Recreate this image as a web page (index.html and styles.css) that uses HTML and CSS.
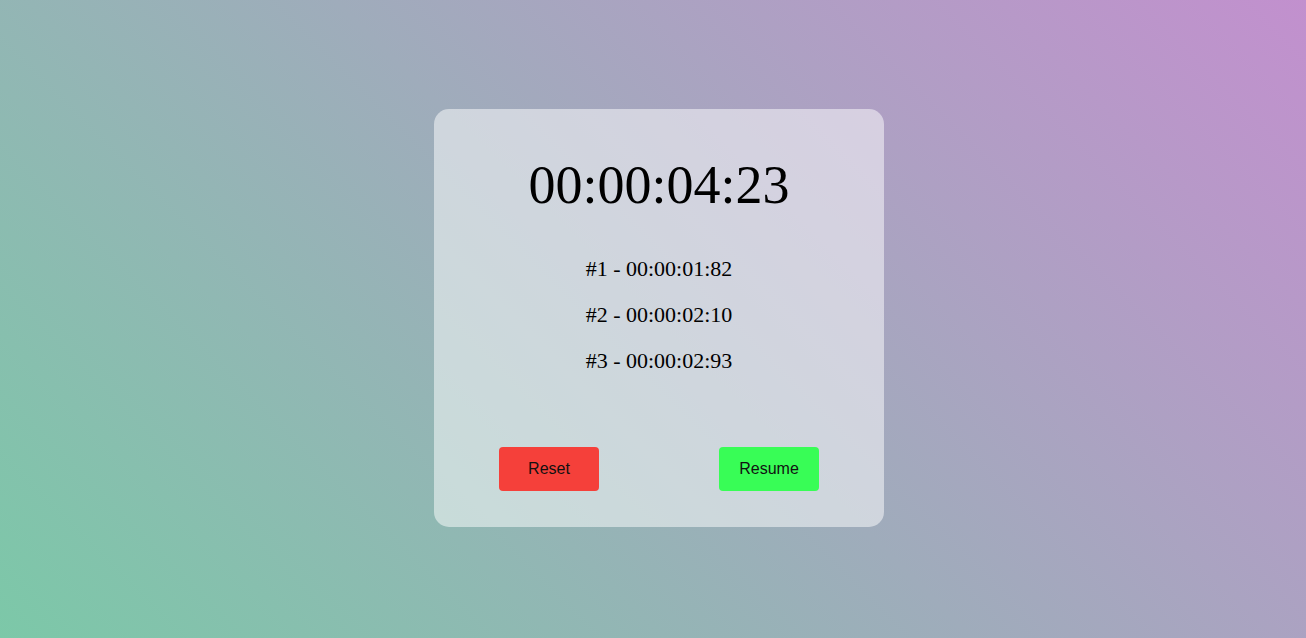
FILE: index.html
```html
<!DOCTYPE html>
<html>
<head>
<meta charset="utf-8">
<link rel="stylesheet" href="styles.css">
</head>
<body>
<main class="page">
  <section class="card">
    <h1 class="timer">00:00:04:23</h1>
    <ul class="laps">
      <li>#1 - 00:00:01:82</li>
      <li>#2 - 00:00:02:10</li>
      <li>#3 - 00:00:02:93</li>
    </ul>
    <div class="actions">
      <button class="btn btn-reset">Reset</button>
      <button class="btn btn-resume">Resume</button>
    </div>
  </section>
</main>
</body>
</html>
```
FILE: styles.css
```css
html, body {
  margin: 0;
  padding: 0;
  height: 100%;
}
body {
  background: linear-gradient(45deg, #7cc8a8 0%, #c290ce 100%);
  font-family: "Liberation Serif", "Times New Roman", serif;
  color: #000;
}
.page {
  height: 100%;
  display: flex;
  justify-content: center;
  align-items: flex-start;
  padding: 109px 0 0 12px;
  box-sizing: border-box;
}
.card {
  width: 450px;
  box-sizing: border-box;
  background: rgba(255, 255, 255, 0.5);
  border-radius: 15px;
  padding: 46px 65px 36px;
  display: flex;
  flex-direction: column;
  align-items: center;
}
.timer {
  margin: 0;
  font-size: 54px;
  font-weight: normal;
  line-height: 60px;
}
.laps {
  list-style: none;
  margin: 31px 0 0;
  padding: 0;
  font-size: 22px;
  line-height: 46px;
  text-align: center;
}
.actions {
  margin-top: 63px;
  align-self: stretch;
  display: flex;
  justify-content: space-between;
}
.btn {
  width: 100px;
  height: 44px;
  border: none;
  border-radius: 4px;
  font-family: "Liberation Sans", Arial, sans-serif;
  font-size: 16px;
  color: #111;
  padding: 0;
}
.btn-reset {
  background: #f5403a;
}
.btn-resume {
  background: #38fd56;
}
```
